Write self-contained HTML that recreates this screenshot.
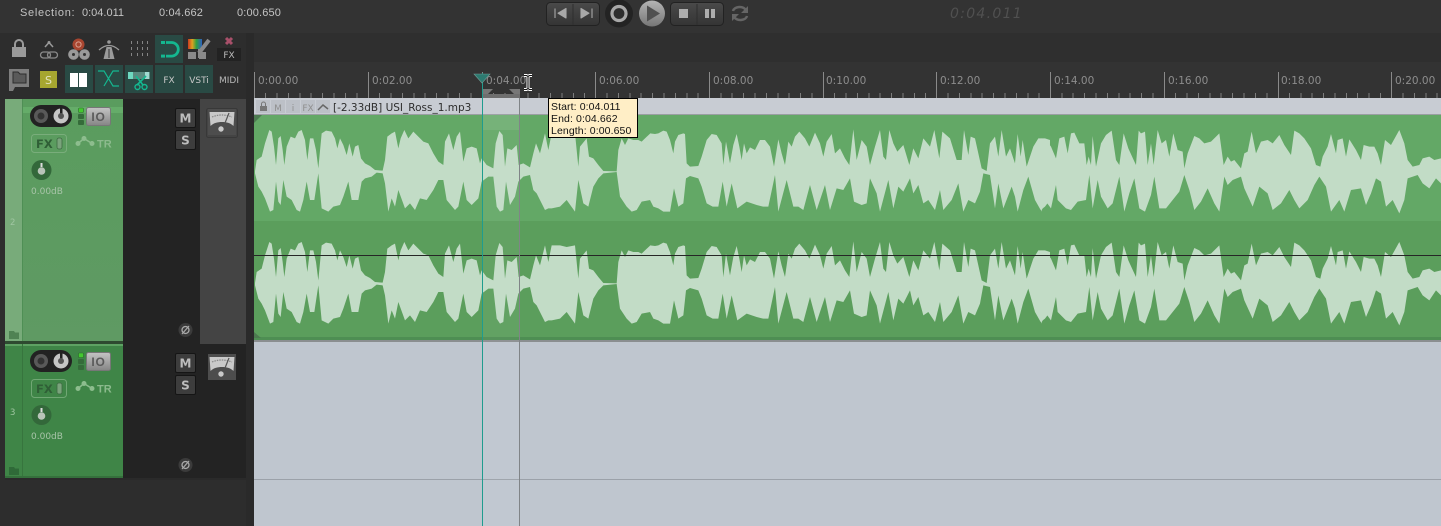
<!DOCTYPE html>
<html><head><meta charset="utf-8"><style>
html,body{margin:0;padding:0;background:#2d2d2d;width:1441px;height:526px;overflow:hidden}
svg{display:block}
text{font-family:"DejaVu Sans","Liberation Sans",sans-serif}
text.l{font-family:"Liberation Sans",sans-serif}
</style></head><body>
<svg width="1441" height="526" viewBox="0 0 1441 526" xmlns="http://www.w3.org/2000/svg">
<defs>
<linearGradient id="g1" x1="0" x2="0" y1="0" y2="1"><stop offset="0" stop-color="#c4c4c4"/><stop offset="1" stop-color="#858585"/></linearGradient>
<linearGradient id="g2" x1="0" x2="0" y1="0" y2="1"><stop offset="0" stop-color="#b4b4b4"/><stop offset="1" stop-color="#767676"/></linearGradient>
<linearGradient id="bt" x1="0" x2="0" y1="0" y2="1"><stop offset="0" stop-color="#4a4a4a"/><stop offset="1" stop-color="#343434"/></linearGradient>
<linearGradient id="tk1" x1="0" x2="0" y1="0" y2="1"><stop offset="0" stop-color="#5a9c5e"/><stop offset="1" stop-color="#5f9a63"/></linearGradient>
<g id="wave" transform="translate(250,110) scale(.33333)" fill="#c2dcc6">
<path d="M15,183L20,150 35,140 45,100 58,60 65,65 72,110 78,165 85,85 92,78 98,120 103,165 110,110 122,80 135,85 145,65 155,60 165,90 172,150 180,85 190,85 198,120 205,175 215,70 228,62 245,65 255,85 262,115 270,85 280,105 290,135 298,100 308,140 315,110 325,105 333,145 345,160 360,168 375,180 398,182 405,150 412,80 425,70 435,65 445,115 452,85 463,60 475,85 490,65 505,80 520,95 535,100 550,130 565,155 580,165 585,95 597,70 610,120 620,80 630,65 640,155 650,115 665,110 680,115 690,160 695,145 710,165 730,175 737,100 748,63 758,75 765,170 772,115 785,120 800,105 806,165 820,160 840,172 850,130 858,100 870,130 885,70 895,120 905,70 930,70 950,75 975,70 985,170 990,110 1010,85 1017,140 1030,145 1045,165 1060,183 1100,184 1105,120 1115,85 1125,105 1135,85 1150,90 1165,90 1175,95 1185,85 1201,70L1201,270 1175,275 1160,300 1145,305 1130,290 1110,260 1100,186 1060,190 1045,205 1030,230 1015,290 1000,280 985,210 975,305 950,270 930,290 905,295 895,295 885,300 860,250 850,240 840,195 820,200 805,215 795,260 780,285 768,215 760,300 750,305 740,290 730,200 715,200 695,215 685,265 665,285 650,270 640,215 625,290 615,300 590,270 580,210 565,210 550,240 530,270 510,265 495,300 480,280 465,295 445,240 435,290 425,265 415,305 405,220 398,190 380,188 365,200 345,205 335,215 325,270 305,270 295,215 280,260 270,285 250,290 235,305 215,295 205,190 193,270 180,270 170,215 160,270 150,305 140,300 125,270 110,260 100,210 92,285 85,275 78,215 70,300 60,305 45,265 35,245 25,230 15,190Z"/>
<path transform="translate(1200,0)" d="M0,70L15,72 25,70 40,62 50,65 60,90 70,130 75,95 85,75 100,70 105,72 110,160 120,170 145,168 155,140 170,90 185,72 200,75 215,100 220,165 228,95 240,160 250,105 260,72 268,110 275,150 282,100 290,130 300,112 315,120 330,90 345,90 360,110 372,170 385,88 395,130 405,165 415,95 425,110 435,80 448,65 465,85 478,110 495,68 510,100 520,140 530,95 545,72 555,130 570,115 585,145 598,165 610,58 620,150 635,90 650,110 660,165 675,110 690,60 700,140 708,150 718,60 730,100 742,125 760,105 778,165 790,115 805,145 820,85 840,110 853,60 868,145 877,65 900,85 920,150 935,150 942,60 955,135 962,80 975,85 985,130 995,175 1010,183 1020,100 1035,80 1045,140 1055,60 1068,140 1080,115 1095,160 1103,72 1112,140 1118,90 1130,170 1150,110 1165,85 1185,85 1200,90L1200,270 1185,290 1172,300 1155,270 1135,200 1120,240 1103,305 1095,260 1085,230 1060,295 1045,220 1035,295 1020,195 1000,190 990,245 975,280 955,270 940,305 925,220 905,270 880,300 870,240 855,300 835,270 820,280 805,225 790,250 780,205 760,245 745,230 730,295 715,210 690,305 680,250 660,205 650,280 635,285 612,275 600,205 580,240 560,235 540,300 525,225 500,300 480,225 460,300 445,290 430,290 410,210 385,305 375,195 355,290 340,290 320,285 290,275 262,295 245,220 230,290 218,215 205,290 188,290 170,280 155,230 145,205 120,198 108,205 100,280 85,290 72,235 60,305 40,305 25,295 10,290 0,270Z"/>
<path transform="translate(2373,0)" d="M0,85L15,90 30,110 45,145 55,85 70,80 80,130 90,70 100,68 115,100 130,100 137,165 143,140 150,165 155,78 165,170 180,100 195,75 212,62 225,150 235,165 248,70 262,115 278,150 285,165 293,62 300,70 312,65 320,165 330,100 338,165 350,60 362,100 375,90 385,140 397,70 410,120 425,125 430,175 440,130 460,78 475,85 490,100 510,95 535,70 548,165 560,140 570,155 580,150 600,175 610,130 620,125 632,65 645,130 660,95 680,90 695,100 715,75 730,105 750,135 760,62 775,70 790,85 810,115 825,165 838,170 845,140 860,110 870,72 885,130 890,90 905,85 915,140 925,88 945,120 960,150 968,105 985,110 1000,110 1010,130 1020,165 1032,90 1050,105 1075,60 1090,100 1100,150 1115,170 1135,165 1145,145 1165,140 1180,150 1200,145L1200,220 1185,205 1165,235 1145,220 1130,195 1100,205 1090,270 1075,310 1055,270 1035,290 1020,215 1005,205 990,250 975,285 960,235 930,240 910,305 895,270 870,305 855,230 835,200 820,225 800,270 775,295 760,270 745,240 720,280 695,300 680,250 655,230 635,290 610,235 600,200 575,210 560,225 550,200 535,305 520,280 500,235 480,275 460,300 445,240 430,195 415,245 395,270 375,295 355,295 340,200 330,255 312,305 295,295 280,205 265,250 250,305 235,200 215,280 200,295 180,260 170,210 155,295 145,195 135,270 110,275 90,300 75,295 50,270 45,225 30,295 15,275 0,305Z"/>
</g>
<g id="tcp">
<rect x="30" y="0" width="42" height="22" rx="11" fill="#222"/>
<circle cx="41" cy="11" r="7" fill="#595959"/><circle cx="41" cy="11" r="3.5" fill="#333"/>
<circle cx="61" cy="11" r="7.5" fill="#c6c6c6"/><rect x="60" y="3" width="2.5" height="8" fill="#222"/><circle cx="61" cy="11" r="3" fill="#555"/>
<rect x="78.500" y="3" width="5" height="4.500" rx="1" fill="#44c830" stroke="#2c6b2c" stroke-width=".6"/>
<rect x="78" y="9" width="6" height="5" rx="1" fill="#356b3a"/><rect x="78" y="15" width="6" height="5" rx="1" fill="#356b3a"/>
<rect x="86.500" y="2.500" width="24" height="18" rx="2" fill="url(#g1)" stroke="#777"/>
<text class="l" x="98.500" y="16" font-size="12" font-weight="bold" fill="#5a5a5a" text-anchor="middle" letter-spacing=".8">IO</text>
<rect x="31.500" y="29.500" width="35" height="18" rx="3" fill="none" stroke="#86b587" stroke-opacity=".7"/>
<text x="36" y="43" font-size="11.500" font-weight="bold" fill="#2f5f36">FX</text>
<rect x="57" y="33" width="5" height="11" rx="2" fill="#7aa37c" stroke="#3d6b42" stroke-width=".8"/>
<path d="M78,38.500 84,33.500 92,38.500" fill="none" stroke="#8dbd8e" stroke-width="1.500"/>
<circle cx="78" cy="38.500" r="2.500" fill="#8dbd8e"/><circle cx="84" cy="33.500" r="2.500" fill="#8dbd8e"/><circle cx="92" cy="38.500" r="2.500" fill="#8dbd8e"/>
<text class="l" x="97" y="42.500" font-size="11" font-weight="bold" fill="#8cba8d">TR</text>
<circle cx="41.500" cy="65" r="10" fill="#33683a"/>
<path d="M41.500,58v4" stroke="#ddd" stroke-width="2"/><circle cx="41.500" cy="66" r="3.800" fill="#b9c4b9"/>
<text x="31" y="89" font-size="9" fill="#a8c4a8">0.00dB</text>
</g>
<g id="ms">
<rect x="175.500" y="0.500" width="20" height="19" rx="1.500" fill="#3d3d3d" stroke="#151515"/>
<text x="185.500" y="14.500" font-size="12" font-weight="bold" fill="#bdbdbd" text-anchor="middle">M</text>
<rect x="175.500" y="22.500" width="20" height="19" rx="1.500" fill="#3d3d3d" stroke="#151515"/>
<text x="185.500" y="36.500" font-size="12" font-weight="bold" fill="#bdbdbd" text-anchor="middle">S</text>
</g>
<g id="meter">
<rect x="208" y="0" width="28" height="26" fill="#4d4d4d"/>
<path d="M209.500,3h25l-1,14c-3,-3 -7,-4 -11.500,-4s-8.500,1 -11.500,4z" fill="#c9c9c9"/>
<path d="M212,8q10,-4 20,0" fill="none" stroke="#888" stroke-width="1.200" stroke-dasharray="1.500 1"/>
<path d="M225,14 229,4" stroke="#555" stroke-width="1.200"/>
<circle cx="221" cy="20" r="2.700" fill="#c9c9c9"/>
</g>
<g id="phase"><circle cx="185.500" cy="0" r="7" fill="#3b3b3b"/><circle cx="185.500" cy="0" r="3.500" fill="none" stroke="#aaa" stroke-width="1.300"/><path d="M182,4 189,-4" stroke="#aaa" stroke-width="1.200"/></g>
<path id="fold" d="M9,0h5l1,1.500h4v6.500h-10z"/>
</defs>

<rect width="1441" height="526" fill="#2d2d2d"/>
<rect width="1441" height="33" fill="#333"/>
<rect y="33" width="1441" height="29" fill="#2d2d2d"/>
<rect x="254" y="33" width="1187" height="29" fill="#2f2f2f"/>
<rect x="246" y="33" width="8" height="493" fill="#2a2a2a"/>

<g font-size="11" fill="#c4c4c4">
<text class="l" x="20" y="16" letter-spacing=".7">Selection:</text><text class="l" x="82" y="16">0:04.011</text><text class="l" x="159" y="16" letter-spacing=".15">0:04.662</text><text class="l" x="237" y="16" letter-spacing=".15">0:00.650</text>
</g>

<rect x="546.500" y="2.500" width="53" height="23" rx="4" fill="url(#bt)" stroke="#222"/>
<path d="M573,4v21" stroke="#2e2e2e"/>
<path d="M555,8.500v9.500M566,8.500v9.500l-8,-4.800z" fill="#a8a8a8" stroke="#a8a8a8" stroke-width="1.100" stroke-linejoin="round"/>
<path d="M581,8.500v9.500l8,-4.800zM592,8.500v9.500" fill="#a8a8a8" stroke="#a8a8a8" stroke-width="1.100" stroke-linejoin="round"/>
<circle cx="619" cy="13.500" r="14" fill="#232323"/><circle cx="619" cy="13.500" r="8.800" fill="#2e2e2e"/><circle cx="619" cy="13.500" r="7" fill="none" stroke="#a8a8a8" stroke-width="3.200"/>
<circle cx="652" cy="13.500" r="13" fill="url(#g2)"/><path d="M647,5.500 660,13.500 647,21.500z" fill="#505050"/>
<rect x="670.500" y="2.500" width="53" height="23" rx="4" fill="url(#bt)" stroke="#222"/>
<path d="M697,4v21" stroke="#2e2e2e"/>
<rect x="679" y="9" width="9" height="9" fill="#aeaeae"/>
<rect x="705" y="9" width="4" height="9" fill="#aeaeae"/><rect x="711" y="9" width="4" height="9" fill="#aeaeae"/>
<path d="M733,11c1,-4 9,-6 13,-1M747,16c-1,4 -9,6 -13,1" fill="none" stroke="#656565" stroke-width="2.500"/>
<path d="M748,6v7h-7zM732,21v-7h7z" fill="#656565"/>
<text x="950" y="18" font-size="14" font-style="italic" fill="#505050" letter-spacing="1.300">0:04.011</text>

<rect x="12" y="47" width="14" height="10" fill="#9a9a9a"/><path d="M15,47v-3a4,4 0 0 1 8,0v3" fill="none" stroke="#9a9a9a" stroke-width="2"/>
<path d="M45,47 49,42.500 53,47" fill="none" stroke="#9a9a9a" stroke-width="1.500"/><circle cx="49" cy="42.500" r="1.500" fill="#9a9a9a"/>
<rect x="40.500" y="52" width="10" height="6" rx="3" fill="none" stroke="#8a8a8a" stroke-width="1.300"/><rect x="47.500" y="52" width="10" height="6" rx="3" fill="none" stroke="#8a8a8a" stroke-width="1.300"/>
<circle cx="78.500" cy="44.500" r="6" fill="#a8452f"/><circle cx="78.500" cy="44.500" r="2.600" fill="none" stroke="#d8a090"/>
<circle cx="73.500" cy="54.500" r="5.300" fill="#9a9a9a"/><circle cx="84.500" cy="54.500" r="5.300" fill="#9a9a9a"/><circle cx="73.500" cy="54.500" r="1.500" fill="#333"/><circle cx="84.500" cy="54.500" r="1.500" fill="#333"/>
<path d="M99,50q10,-9 20,0" fill="none" stroke="#999" stroke-width="1.300"/><path d="M106.500,47h5l3,12h-11z" fill="#9a9a9a"/><path d="M109,49v9" stroke="#333"/><circle cx="109" cy="42" r="1.800" fill="#999"/>
<path d="M131.500,41v17M137.500,41v17M142.500,41v17M147.500,41v17" stroke="#858585" stroke-dasharray="3 3"/>
<rect x="155" y="35" width="28" height="28" fill="#294a44"/>
<path d="M166,42.500h5.500a6.800,6.800 0 0 1 0,13.600h-5.500" fill="none" stroke="#14b890" stroke-width="2.800"/><rect x="161" y="41" width="4" height="3" fill="#14b890"/><rect x="161" y="54.600" width="4" height="3" fill="#14b890"/>
<linearGradient id="rb" x1="0" x2="1"><stop offset="0" stop-color="#c83a20"/><stop offset=".3" stop-color="#e0a020"/><stop offset=".6" stop-color="#30a040"/><stop offset="1" stop-color="#3060c0"/></linearGradient>
<rect x="188" y="39" width="14" height="10" fill="url(#rb)"/>
<path d="M199,53 209,40" stroke="#8a8a8a" stroke-width="4"/>
<rect x="188" y="52" width="8" height="7" fill="#8a8a8a"/><rect x="199" y="52" width="7" height="7" fill="#8a8a8a"/><path d="M198,49h4v9h-4z" fill="#8a8a8a"/>
<path d="M226,38l6,6M232,38l-6,6" stroke="#a8506a" stroke-width="3"/>
<rect x="217" y="48" width="24" height="13" fill="#222"/>
<text x="229" y="58" font-size="9" fill="#bbb" text-anchor="middle">FX</text>

<path d="M9,69h20v18h-14l-2,4h-4z" fill="#7e7e7e"/><path d="M13,72h5l2,2h6v9h-13z" fill="#5a5a5a" stroke="#2d2d2d"/>
<rect x="40" y="71" width="17" height="17" fill="#a6a630"/><text x="48.500" y="84" font-size="11" fill="#e2e2c0" text-anchor="middle">S</text>
<g fill="#294a44"><rect x="65" y="65" width="28" height="28"/><rect x="95" y="65" width="28" height="28"/><rect x="125" y="65" width="28" height="28"/><rect x="155" y="65" width="28" height="28"/><rect x="185" y="65" width="28" height="28"/></g>
<rect x="70" y="73" width="8" height="14" fill="#fff"/><rect x="79" y="73" width="8" height="14" fill="#fff"/>
<path d="M98,71h6l9,15h6M119,71h-6l-9,15" fill="none" stroke="#14b890" stroke-width="1.200"/>
<rect x="128" y="72" width="22" height="7" fill="#5a8a80"/><rect x="128" y="72" width="5" height="7" fill="#6ed8c0"/><rect x="145" y="72" width="4" height="7" fill="#a0d8d0"/>
<path d="M146,76 137,85M136,76 143,85" stroke="#14b890" stroke-width="1.600"/><circle cx="137.500" cy="87" r="2.500" fill="none" stroke="#14b890" stroke-width="1.400"/><circle cx="144.500" cy="87" r="2.500" fill="none" stroke="#14b890" stroke-width="1.400"/>
<text x="169" y="83" font-size="9" fill="#c8c8c8" text-anchor="middle">FX</text>
<text x="199" y="83" font-size="9" fill="#c8c8c8" text-anchor="middle">VSTi</text>
<text x="229" y="83" font-size="9" fill="#b8b8b8" text-anchor="middle">MIDI</text>

<rect x="123" y="99" width="123" height="379" fill="#232323"/>
<rect x="200" y="99" width="46" height="245" fill="#444"/>
<rect x="5" y="478" width="241" height="2" fill="#2a2a2a"/>
<rect x="5" y="99" width="118" height="243" fill="url(#tk1)"/>
<rect x="5" y="99" width="17" height="243" fill="#78ab7a"/><rect x="22" y="99" width="1" height="243" fill="#4f8f55"/>
<rect x="23" y="107" width="100" height="6" fill="#68b06c" opacity=".8"/>
<rect x="5" y="341" width="118" height="3" fill="#2e4a30"/>
<text x="10" y="225" font-size="8.500" fill="#9fc5a1">2</text>
<use href="#fold" fill="#4f8253" transform="translate(0,331)"/>
<use href="#tcp" transform="translate(0,105)"/>
<use href="#ms" transform="translate(0,108)"/>
<use href="#meter" transform="translate(0,109)"/>
<rect x="206.500" y="108.500" width="31" height="29" rx="2" fill="none" stroke="#383838"/>
<use href="#phase" transform="translate(0,330)"/>
<rect x="5" y="344" width="118" height="134" fill="#3f8547"/>
<rect x="5" y="344" width="118" height="2" fill="#5ea263"/>
<rect x="22" y="344" width="1" height="134" fill="#37753e"/>
<rect x="5" y="476" width="118" height="2" fill="#35703c"/>
<text x="10" y="415" font-size="8.500" fill="#9fc5a1">3</text>
<use href="#fold" fill="#2f6a38" transform="translate(0,467)"/>
<use href="#tcp" transform="translate(0,350)"/>
<use href="#ms" transform="translate(0,353)"/>
<use href="#meter" transform="translate(0,354)"/>
<use href="#phase" transform="translate(0,465)"/>

<rect x="254" y="62" width="1187" height="36" fill="#333"/>
<g stroke="#8a8a8a"><path d="M254.500,72v26M368.500,72v26M482.500,72v26M595.500,72v26M709.500,72v26M823.500,72v26M936.500,72v26M1050.500,72v26M1164.500,72v26M1278.500,72v26M1391.500,72v26"/></g>
<path d="M265.500,93v5M277,93v5M288.500,93v5M300,93v5M311,93v5M322.500,93v5M334,93v5M345.500,93v5M357,93v5M379.500,93v5M391,93v5M402.500,93v5M414,93v5M425,93v5M436.500,93v5M448,93v5M459.500,93v5M471,93v5M493.500,93v5M505,93v5M516.500,93v5M528,93v5M539,93v5M550.500,93v5M562,93v5M573.500,93v5M584.500,93v5M607,93v5M618.500,93v5M630,93v5M641,93v5M652.500,93v5M664,93v5M675.500,93v5M687,93v5M698,93v5M721,93v5M732,93v5M743.500,93v5M755,93v5M766.500,93v5M778,93v5M789,93v5M800.500,93v5M812,93v5M834.500,93v5M846,93v5M857.500,93v5M869,93v5M880,93v5M891.500,93v5M903,93v5M914.500,93v5M925.500,93v5M948,93v5M959.500,93v5M971,93v5M982,93v5M993.500,93v5M1005,93v5M1016.500,93v5M1028,93v5M1039,93v5M1062,93v5M1073,93v5M1084.500,93v5M1096,93v5M1107.500,93v5M1119,93v5M1130,93v5M1141.500,93v5M1153,93v5M1175.500,93v5M1187,93v5M1198.500,93v5M1210,93v5M1221,93v5M1232.500,93v5M1244,93v5M1255.500,93v5M1267,93v5M1289.500,93v5M1301,93v5M1312,93v5M1323.500,93v5M1335,93v5M1346.500,93v5M1357.500,93v5M1369,93v5M1380.500,93v5M1403,93v5M1414.500,93v5M1426,93v5M1437,93v5" stroke="#7d7d7d"/>
<g font-size="10.500" fill="#8d8d8d">
<text x="258" y="84">0:00.00</text><text x="372" y="84">0:02.00</text><text x="486" y="84">0:04.00</text><text x="599" y="84">0:06.00</text><text x="713" y="84">0:08.00</text><text x="826" y="84">0:10.00</text><text x="940" y="84">0:12.00</text><text x="1054" y="84">0:14.00</text><text x="1168" y="84">0:16.00</text><text x="1281" y="84">0:18.00</text><text x="1395" y="84">0:20.00</text>
</g>
<rect x="254" y="342" width="1187" height="184" fill="#bfc6cf"/>
<rect x="254" y="479" width="1187" height="1" fill="#9ba1a9"/>
<rect x="254" y="98" width="1187" height="16" fill="#c8ccd3"/>
<rect x="254" y="114" width="1187" height="1.500" fill="#9a9ea2"/>
<rect x="254" y="115" width="1187" height="106" fill="#63a866"/>
<rect x="254" y="221" width="1187" height="116" fill="#5b9e5c"/>
<rect x="254" y="337" width="1187" height="3" fill="#4e8e53"/>
<rect x="254" y="340" width="1187" height="2" fill="#8a8e90"/>
<path d="M254,115h8l-8,8zM254,332l7,6h-7z" fill="#4c7a50"/>
<use href="#wave"/>
<use href="#wave" transform="translate(0,112)"/>
<rect x="254" y="255" width="1187" height="1" fill="#262626"/>
<g fill="#bcc0c7"><rect x="256" y="100" width="14" height="13"/><rect x="271" y="100" width="14" height="13"/><rect x="286" y="100" width="14" height="13"/><rect x="301" y="100" width="14" height="13"/><rect x="316" y="100" width="14" height="13"/></g>
<rect x="260" y="106" width="7" height="5" fill="#777"/><path d="M261.500,106v-2a2,2 0 0 1 4,0v2" fill="none" stroke="#777"/>
<g font-size="9" fill="#8f8f8f"><text x="278" y="111" text-anchor="middle">M</text><text x="293" y="111" text-anchor="middle">i</text><text x="308" y="111" text-anchor="middle">FX</text></g>
<path d="M318,110 323,105 328,109" fill="none" stroke="#666" stroke-width="1.500"/>
<text x="333" y="111" font-size="10.500" fill="#2e2e2e">[-2.33dB] USI_Ross_1.mp3</text>
<rect x="482" y="98" width="37" height="428" fill="#fff" opacity=".045"/>
<rect x="483" y="115" width="36" height="15" fill="#fff" opacity=".09"/>
<rect x="483" y="130" width="36" height="91" fill="#fff" opacity=".02"/>
<rect x="519" y="98" width="1" height="428" fill="#808487"/>
<rect x="482" y="73" width="1" height="453" fill="#1f9c8e"/>
<path d="M474,74h16l-8,9z" fill="#2d7a70" stroke="#6f9a94" stroke-width=".6"/>
<rect x="483" y="94" width="37" height="4" fill="#6e6e6e"/>
<path d="M483,89h10l-5,5h-5zM520,89h-11l5,5h6z" fill="#777"/>
<path d="M524,75.500h2.500l1.500,1 1.500,-1h2.500M528,76.500v12M524,89.500h2.500l1.500,-1 1.500,1h2.500" fill="none" stroke="#fff" stroke-width="3"/>
<path d="M524,75.500h2.500l1.500,1 1.500,-1h2.500M528,76.500v12M524,89.500h2.500l1.500,-1 1.500,1h2.500" fill="none" stroke="#111" stroke-width="1.100"/>
<rect x="548.500" y="98.500" width="89" height="39" fill="#ffeec6" stroke="#000"/>
<g font-size="10.500" fill="#111" letter-spacing=".1">
<text class="l" x="551" y="110">Start: 0:04.011</text><text class="l" x="551" y="122">End: 0:04.662</text><text class="l" x="551" y="134">Length: 0:00.650</text>
</g>
</svg>
</body></html>
